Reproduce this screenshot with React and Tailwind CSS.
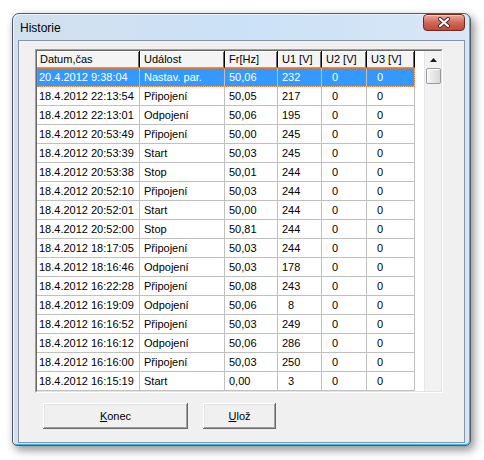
import React from 'react';

const rows = [
  ['20.4.2012 9:38:04', 'Nastav. par.', '50,06', 232],
  ['18.4.2012 22:13:54', 'Připojení', '50,05', 217],
  ['18.4.2012 22:13:01', 'Odpojení', '50,06', 195],
  ['18.4.2012 20:53:49', 'Připojení', '50,00', 245],
  ['18.4.2012 20:53:39', 'Start', '50,03', 245],
  ['18.4.2012 20:53:38', 'Stop', '50,01', 244],
  ['18.4.2012 20:52:10', 'Připojení', '50,03', 244],
  ['18.4.2012 20:52:01', 'Start', '50,00', 244],
  ['18.4.2012 20:52:00', 'Stop', '50,81', 244],
  ['18.4.2012 18:17:05', 'Připojení', '50,03', 244],
  ['18.4.2012 18:16:46', 'Odpojení', '50,03', 178],
  ['18.4.2012 16:22:28', 'Připojení', '50,08', 243],
  ['18.4.2012 16:19:09', 'Odpojení', '50,06', 8],
  ['18.4.2012 16:16:52', 'Připojení', '50,03', 249],
  ['18.4.2012 16:16:12', 'Odpojení', '50,06', 286],
  ['18.4.2012 16:16:00', 'Připojení', '50,03', 250],
  ['18.4.2012 16:15:19', 'Start', '0,00', 3],
];

const cols = [
  { title: 'Datum,čas', w: 'w-[103px]', pad: 'pl-[2px]' },
  { title: 'Událost', w: 'w-[85px]', pad: 'pl-[4px]' },
  { title: 'Fr[Hz]', w: 'w-[53px]', pad: 'pl-[4px]' },
  { title: 'U1 [V]', w: 'w-[44px]', pad: 'pl-[4px]' },
  { title: 'U2 [V]', w: 'w-[45px]', pad: 'pl-[4px]' },
  { title: 'U3 [V]', w: 'w-[48px]', pad: 'pl-[4px]' },
];

// values are printed as %3d, leading spaces included
const pad3 = n => String(n).padStart(3, ' ');

const CloseButton = () => (
  <div className="w-[42px] h-[17px] rounded-[4px] border border-[#6f2a20] bg-gradient-to-b from-[#e9a99c] via-[#d0685a] to-[#c54535] shadow-[inset_0_1px_#f3c8bf] flex items-center justify-center">
    <svg width="14" height="11" viewBox="0 0 14 11">
      <path d="M3 2 L11 9 M11 2 L3 9" stroke="#3b2a28" strokeWidth="4" strokeLinecap="round" />
      <path d="M3 2 L11 9 M11 2 L3 9" stroke="#ffffff" strokeWidth="2.2" strokeLinecap="round" />
    </svg>
  </div>
);

const Button = ({ u, rest, w }) => (
  <button className={`${w} h-[26px] bg-[#f0f0f0] text-[11px] text-black shadow-[inset_-1px_-1px_#696969,inset_1px_1px_#ffffff,inset_-2px_-2px_#a0a0a0,inset_2px_2px_#e3e3e3]`}>
    <span className="underline">{u}</span>{rest}
  </button>
);

const ListView = () => (
  <div className="w-[408px] h-[344px] border border-t-[#a0a0a0] border-l-[#a0a0a0] border-r-white border-b-white">
    <div className="w-full h-full border border-t-[#696969] border-l-[#696969] border-r-[#e3e3e3] border-b-[#e3e3e3] bg-white flex">
      <div className="flex flex-col">
        <div className="flex h-[17px]">
          {cols.map(c => (
            <div key={c.title} className={`${c.w} h-[17px] ${c.pad === 'pl-[2px]' ? 'pl-[3px]' : 'pl-[4px]'} text-[11px] leading-[16px] bg-[#f4f4f4] border-r border-black border-b border-b-[#a0a0a0] shadow-[inset_1px_1px_#ffffff,inset_-1px_0_#696969] whitespace-nowrap`}>
              {c.title}
            </div>
          ))}
        </div>
        {rows.map((r, i) => {
          const sel = i === 0;
          const cells = [r[0], r[1], r[2], pad3(r[3]), pad3(0), pad3(0)];
          return (
            <div key={i} className={`flex h-[19px] ${sel ? 'bg-[#3399ff] text-white outline-1 outline-dotted outline-[#e8803c] -outline-offset-1' : 'text-black'}`}>
              {cells.map((v, j) => (
                <div key={j} className={`${cols[j].w} h-[19px] ${cols[j].pad} text-[11px] leading-[18px] border-r border-b border-[#c0c0c0] whitespace-pre`}>
                  {v}
                </div>
              ))}
            </div>
          );
        })}
      </div>
      <div className="w-[9px]" />
      <div className="w-[17px] bg-[#f2f2f2] border-l border-[#e6e6e6] flex flex-col items-center">
        <div className="h-[17px] flex items-center justify-center">
          <svg width="7" height="4" viewBox="0 0 7 4">
            <path d="M0 4 L3.5 0 L7 4 Z" fill="#1a1a1a" />
          </svg>
        </div>
        <div className="w-[15px] h-[16px] rounded-[2px] border border-[#9a9a9a] bg-gradient-to-r from-[#f6f6f6] to-[#d8d8d8] shadow-[inset_1px_1px_#ffffff]" />
      </div>
    </div>
  </div>
);

export default function App() {
  return (
    <div className="w-[484px] h-[460px] bg-white pt-[13px] pl-[12px] font-['Liberation_Sans',Arial,sans-serif]">
      <div className="w-[459px] h-[433px] rounded-t-[7px] rounded-b-[5px] border border-[#4f5b68] bg-gradient-to-r from-[#d2e0ee] via-[#cbe1f7] to-[#d8e7f6] shadow-[inset_-1px_-1px_#3ab6ec,inset_1px_1px_#eef5fc,3px_4px_10px_rgba(0,0,0,0.45)] flex flex-col">
        <div className="h-[26px] flex justify-between pl-[7px] pr-[5px]">
          <span className="mt-[5px] text-[12px] text-black">Historie</span>
          <CloseButton />
        </div>
        <div className="mx-[5px] h-[403px] border border-[#8593a3] bg-[#f0f0f0] flex flex-col pl-[16px] pt-[8px]">
          <ListView />
          <div className="flex gap-[15px] mt-[10px] pl-[8px]">
            <Button u="K" rest="onec" w="w-[145px]" />
            <Button u="U" rest="lož" w="w-[73px]" />
          </div>
        </div>
      </div>
    </div>
  );
}
